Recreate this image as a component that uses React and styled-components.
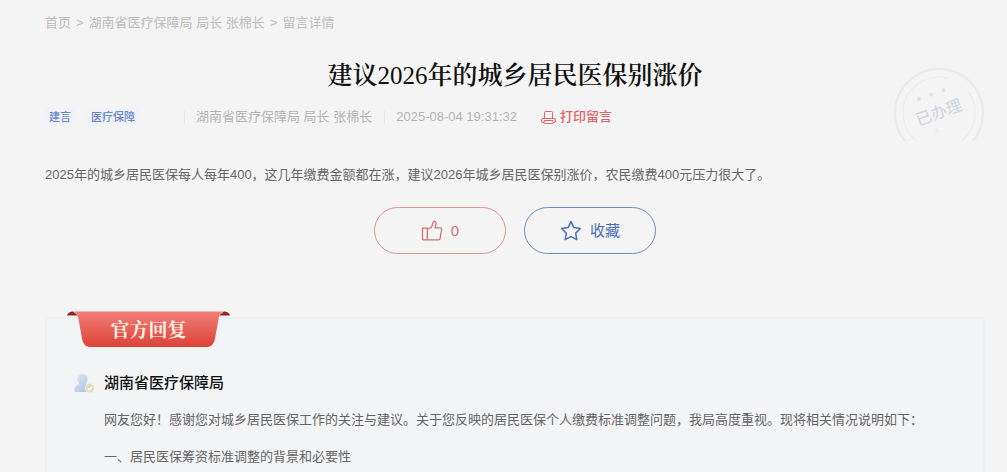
import React from 'react';
import styled, { createGlobalStyle } from 'styled-components';

const sans = '"Liberation Sans", "Noto Sans CJK SC", sans-serif';
const serif =
  '"Liberation Serif", "Noto Serif CJK SC", "Source Han Serif SC", "Noto Sans CJK SC", serif';

const GlobalStyle = createGlobalStyle`
  * {
    box-sizing: border-box;
  }

  body {
    margin: 0;
    background: #f4f4f4;
    color: #666;
    font-family: ${sans};
    font-size: 13px;
  }
`;

const Page = styled.div`
  display: flex;
  flex-direction: column;
  min-height: 100vh;
  padding: 13px 22px 0 45px;
`;

const Breadcrumb = styled.nav`
  display: flex;
  gap: 5px;
  line-height: 20px;
  color: #bdbdbd;
`;

const Crumb = styled.a`
  color: inherit;
  text-decoration: none;
`;

const Header = styled.header`
  position: relative;
  height: 108px;
  padding-top: 25px;
  overflow: hidden;
`;

const Title = styled.h1`
  margin: 0;
  color: #111;
  font-family: ${serif};
  font-size: 25px;
  font-weight: 600;
  line-height: 36px;
  text-align: center;
`;

const Year = styled.span`
  font-weight: 400;
`;

const Meta = styled.div`
  display: flex;
  align-items: center;
  margin-top: 13px;
  line-height: 20px;
  color: #b4b4b8;
`;

const TagGroup = styled.div`
  display: flex;
  gap: 12px;
  width: 139px;
`;

const Tag = styled.span`
  padding: 0 4px;
  background: #eff2f8;
  color: #6c88ca;
  font-size: 11px;
  font-weight: 500;
  line-height: 18px;
`;

const MetaItem = styled.span`
  display: flex;
  align-items: center;
  gap: 11px;
  padding-right: 12px;

  &::before {
    content: '';
    width: 1px;
    height: 12px;
    background: #e6e6e8;
  }
`;

const PrintButton = styled.button`
  display: flex;
  align-items: center;
  gap: 4px;
  margin-left: 12px;
  padding: 0;
  border: 0;
  background: none;
  color: #e0646a;
  font-family: inherit;
  font-size: 13px;
  font-weight: 500;
  line-height: 20px;
`;

const Stamp = styled.svg`
  position: absolute;
  top: 34px;
  right: 0;
`;

const Message = styled.p`
  margin: 24px 0 0;
  line-height: 20px;
`;

const Actions = styled.div`
  display: flex;
  justify-content: center;
  gap: 18px;
  margin-top: 22px;
`;

const ActionButton = styled.button`
  display: flex;
  align-items: center;
  justify-content: center;
  gap: 8px;
  width: 132px;
  height: 47px;
  padding: 0;
  border: 1px solid ${(props) => props.$border};
  border-radius: 24px;
  background: transparent;
  color: ${(props) => props.$color};
  font-family: inherit;
  font-size: 15px;
  line-height: 20px;
`;

const Reply = styled.section`
  flex: 1;
  margin-top: 63px;
  padding: 0 20px;
  border: 2px solid #eff0f2;
  border-bottom: 0;
  background: #f2f4f6;
`;

const Ribbon = styled.div`
  position: relative;
  width: 163px;
  height: 37px;
  margin-top: -8px;
`;

const RibbonShape = styled.svg`
  display: block;
`;

const RibbonText = styled.h2`
  position: absolute;
  inset: 0;
  margin: 0;
  color: #fff2ea;
  font-family: ${serif};
  font-size: 19px;
  font-weight: 700;
  line-height: 40px;
  text-align: center;
`;

const Department = styled.div`
  display: flex;
  align-items: center;
  gap: 9px;
  margin-top: 23px;
  padding-left: 7px;
`;

const DepartmentName = styled.h3`
  margin: 0;
  color: #111;
  font-size: 15px;
  font-weight: 500;
  line-height: 24px;
`;

const ReplyBody = styled.div`
  margin-top: 6px;
  padding-left: 37px;
`;

const Paragraph = styled.p`
  margin: 0;
  line-height: 37px;
`;

const PrintIcon = () => (
  <svg width="15" height="15" viewBox="0 0 15 15" fill="none" stroke="currentColor">
    <path d="M3.5 8.5v-6a1 1 0 0 1 1-1h6a1 1 0 0 1 1 1v6" />
    <path d="M3 12.500H2A1.500 1.500 0 0 1 .5 11v-1A1.500 1.500 0 0 1 2 8.500h11a1.500 1.500 0 0 1 1.500 1.500v1a1.500 1.500 0 0 1-1.500 1.500h-1" />
    <path d="M3 10.500h9v2a1 1 0 0 1-1 1H4a1 1 0 0 1-1-1z" />
  </svg>
);

const ThumbIcon = () => (
  <svg width="22" height="22" viewBox="0 0 22 22" fill="none" stroke="currentColor" strokeWidth="1.3" strokeLinejoin="round">
    <path d="M1.5 8.2h4.8v11.6H2.500a1 1 0 0 1-1-1z" />
    <path d="M6.3 9.5 10.6 7l1.6-4.800c.3-.9 1-1.200 1.700-.9.900.3 1.300 1.100 1.100 2.100l-.8 4.400h5.200c.8 0 1.300.6 1.200 1.400l-1.500 9.400c-.1.800-.6 1.200-1.400 1.200H6.300" />
  </svg>
);

const StarIcon = () => (
  <svg width="22" height="22" viewBox="0 0 22 22" fill="none" stroke="currentColor" strokeWidth="1.5" strokeLinejoin="round">
    <path d="m11 1.6 2.9 6 6.5.9-4.700 4.600 1.100 6.600-5.800-3.100-5.800 3.100 1.100-6.600L1.600 8.500l6.500-.9z" />
  </svg>
);

const UserIcon = () => (
  <svg width="21" height="21" viewBox="0 0 21 21">
    <defs>
      <linearGradient id="user" x1="0" y1="0" x2="1" y2="1">
        <stop offset="0" stopColor="#e0e7f6" />
        <stop offset="1" stopColor="#aebde2" />
      </linearGradient>
    </defs>
    <path
      d="M8.5 1a5 5 0 0 1 5 5.200c0 1.900-.8 3.500-1.900 4.500.5 1 4.400 1.500 4.400 5.300V19H.5v-3c0-3.800 4.300-4.300 4.900-5.300A6 6 0 0 1 3.500 6.200 5 5 0 0 1 8.500 1z"
      fill="url(#user)"
    />
    <circle cx="15.8" cy="15.2" r="4.6" fill="#e3dcbc" stroke="#f2efe2" />
    <path d="m13.6 15.2 1.6 1.6 3-3.100" fill="none" stroke="#fff" strokeWidth="1.3" />
  </svg>
);

const HandledStamp = () => (
  <Stamp width="92" height="92" viewBox="0 0 92 92" role="img" aria-label="已办理">
    <g fill="none" stroke="#e9eaec">
      <circle cx="46" cy="46" r="44" strokeWidth="2" />
      <circle cx="46" cy="46" r="36" strokeDasharray="72 24" transform="rotate(170 46 46)" />
    </g>
    <g transform="rotate(-20 46 46)" fill="#e0e2e7">
      <circle cx="32" cy="26" r="2" />
      <circle cx="45" cy="26" r="2" />
      <circle cx="58" cy="26" r="2" />
      <text x="46" y="51" textAnchor="middle" fontSize="16" fill="#ced3df">
        已办理
      </text>
      <circle cx="38" cy="62" r="2" fill="#e9eceb" />
    </g>
  </Stamp>
);

const App = () => (
  <>
    <GlobalStyle />
    <Page>
      <Breadcrumb>
        <Crumb href="#">首页</Crumb>
        <span>&gt;</span>
        <Crumb href="#">湖南省医疗保障局 局长 张棉长</Crumb>
        <span>&gt;</span>
        <span>留言详情</span>
      </Breadcrumb>
      <Header>
        <Title>
          建议<Year>2026</Year>年的城乡居民医保别涨价
        </Title>
        <Meta>
          <TagGroup>
            <Tag>建言</Tag>
            <Tag>医疗保障</Tag>
          </TagGroup>
          <MetaItem>湖南省医疗保障局 局长 张棉长</MetaItem>
          <MetaItem>2025-08-04 19:31:32</MetaItem>
          <PrintButton type="button">
            <PrintIcon />
            打印留言
          </PrintButton>
        </Meta>
        <HandledStamp />
      </Header>
      <Message>
        2025年的城乡居民医保每人每年400，这几年缴费金额都在涨，建议2026年城乡居民医保别涨价，农民缴费400元压力很大了。
      </Message>
      <Actions>
        <ActionButton type="button" $border="#dc9496" $color="#cd7472">
          <ThumbIcon />
          <span>0</span>
        </ActionButton>
        <ActionButton type="button" $border="#6d8cc6" $color="#4c6fb8">
          <StarIcon />
          <span>收藏</span>
        </ActionButton>
      </Actions>
      <Reply>
        <Ribbon>
          <RibbonShape width="163" height="37" viewBox="0 0 163 37">
            <defs>
              <linearGradient id="ribbon" x1="0" y1="0" x2="0" y2="1">
                <stop offset="0" stopColor="#f27f79" />
                <stop offset="1" stopColor="#dc4237" />
              </linearGradient>
            </defs>
            <path d="M0 4.5C1 1.5 3 .5 6 .5l5 4zM163 4.5C162 1.5 160 .5 157 .5l-5 4z" fill="#8f2824" />
            <path
              d="M5 .5h153c-3 0-5 2-6 5l-4 22c-1 6-4 8.500-9 8.500H24c-5 0-8-2.500-9-8.500l-4-22c-1-3-3-5-6-5z"
              fill="url(#ribbon)"
            />
          </RibbonShape>
          <RibbonText>官方回复</RibbonText>
        </Ribbon>
        <Department>
          <UserIcon />
          <DepartmentName>湖南省医疗保障局</DepartmentName>
        </Department>
        <ReplyBody>
          <Paragraph>
            网友您好！感谢您对城乡居民医保工作的关注与建议。关于您反映的居民医保个人缴费标准调整问题，我局高度重视。现将相关情况说明如下：
          </Paragraph>
          <Paragraph>一、居民医保筹资标准调整的背景和必要性</Paragraph>
        </ReplyBody>
      </Reply>
    </Page>
  </>
);

export default App;
